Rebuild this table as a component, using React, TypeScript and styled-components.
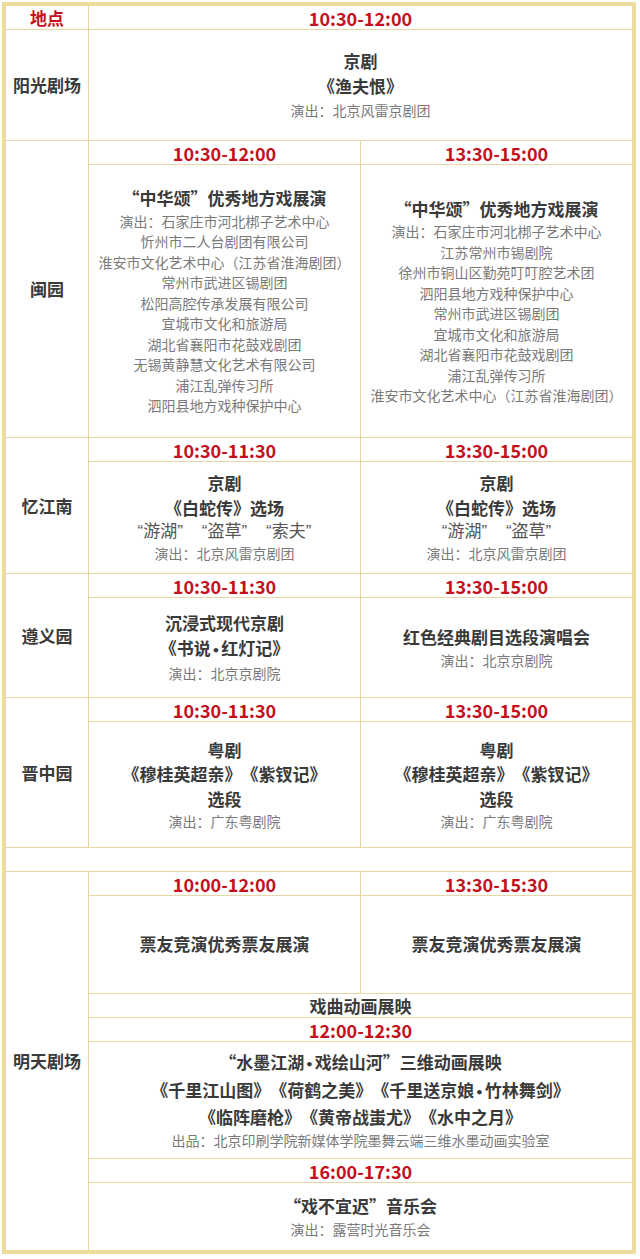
import styled, { createGlobalStyle } from 'styled-components'

const line = '#e6d6a6'
const gold = '#eedc9c'
const red = '#c4101c'

const GlobalStyle = createGlobalStyle`
  body {
    margin: 0;
    background: #fff;
    font-family: 'Noto Sans CJK SC', 'Noto Sans', sans-serif;
    text-spacing-trim: space-all;
  }
`

type Show = {
  time: string
  titles: React.ReactNode[]
  quotes?: string
  credits: string[]
}

export default function App() {
  return (
    <Page>
      <GlobalStyle />
      <Frame>
        <Row>
          <Label $red>地点</Label>
          <Body>
            <TimeBar $last>10:30-12:00</TimeBar>
          </Body>
        </Row>

        <Row>
          <Label>阳光剧场</Label>
          <Body>
            <Content $h={110}>
              <Title>京剧</Title>
              <Title>《渔夫恨》</Title>
              <Credit $gap>演出：北京风雷京剧团</Credit>
            </Content>
          </Body>
        </Row>

        <VenueRow
          name='闽园'
          h={272}
          shows={[
            {
              time: '10:30-12:00',
              titles: ['“中华颂”优秀地方戏展演'],
              credits: [
                '演出：石家庄市河北梆子艺术中心',
                '忻州市二人台剧团有限公司',
                '淮安市文化艺术中心（江苏省淮海剧团）',
                '常州市武进区锡剧团',
                '松阳高腔传承发展有限公司',
                '宜城市文化和旅游局',
                '湖北省襄阳市花鼓戏剧团',
                '无锡黄静慧文化艺术有限公司',
                '浦江乱弹传习所',
                '泗阳县地方戏种保护中心',
              ],
            },
            {
              time: '13:30-15:00',
              titles: ['“中华颂”优秀地方戏展演'],
              credits: [
                '演出：石家庄市河北梆子艺术中心',
                '江苏常州市锡剧院',
                '徐州市铜山区勤苑叮叮腔艺术团',
                '泗阳县地方戏种保护中心',
                '常州市武进区锡剧团',
                '宜城市文化和旅游局',
                '湖北省襄阳市花鼓戏剧团',
                '浦江乱弹传习所',
                '淮安市文化艺术中心（江苏省淮海剧团）',
              ],
            },
          ]}
        />

        <VenueRow
          name='忆江南'
          h={111}
          shows={[
            {
              time: '10:30-11:30',
              titles: ['京剧', '《白蛇传》选场'],
              quotes: '“游湖”    “盗草”    “索夫”',
              credits: ['演出：北京风雷京剧团'],
            },
            {
              time: '13:30-15:00',
              titles: ['京剧', '《白蛇传》选场'],
              quotes: '“游湖”    “盗草”',
              credits: ['演出：北京风雷京剧团'],
            },
          ]}
        />

        <VenueRow
          name='遵义园'
          h={99}
          shows={[
            {
              time: '10:30-11:30',
              titles: ['沉浸式现代京剧', <>《书说<Dot>•</Dot>红灯记》</>],
              credits: ['演出：北京京剧院'],
            },
            {
              time: '13:30-15:00',
              titles: ['红色经典剧目选段演唱会'],
              credits: ['演出：北京京剧院'],
            },
          ]}
        />

        <VenueRow
          name='晋中园'
          h={125}
          shows={[
            {
              time: '10:30-11:30',
              titles: ['粤剧', '《穆桂英超亲》《紫钗记》', '选段'],
              credits: ['演出：广东粤剧院'],
            },
            {
              time: '13:30-15:00',
              titles: ['粤剧', '《穆桂英超亲》《紫钗记》', '选段'],
              credits: ['演出：广东粤剧院'],
            },
          ]}
        />

        <Spacer />

        <Row $last>
          <Label>明天剧场</Label>
          <Body>
            <Split $divided>
              <Slot>
                <TimeBar>10:00-12:00</TimeBar>
                <Content $h={97}>
                  <Title>票友竞演优秀票友展演</Title>
                </Content>
              </Slot>
              <Slot>
                <TimeBar>13:30-15:30</TimeBar>
                <Content $h={97}>
                  <Title>票友竞演优秀票友展演</Title>
                </Content>
              </Slot>
            </Split>
            <TimeBar $dark>戏曲动画展映</TimeBar>
            <TimeBar>12:00-12:30</TimeBar>
            <Content $h={116} $divided>
              <Title>“水墨江湖<Dot>•</Dot>戏绘山河”三维动画展映</Title>
              <Title>《千里江山图》《荷鹤之美》《千里送京娘<Dot>•</Dot>竹林舞剑》</Title>
              <Title>《临阵磨枪》《黄帝战蚩尤》《水中之月》</Title>
              <Credit>出品：北京印刷学院新媒体学院墨舞云端三维水墨动画实验室</Credit>
            </Content>
            <TimeBar>16:00-17:30</TimeBar>
            <Content $h={67}>
              <Title>“戏不宜迟”音乐会</Title>
              <Credit>演出：露营时光音乐会</Credit>
            </Content>
          </Body>
        </Row>
      </Frame>
    </Page>
  )
}

function VenueRow({ name, h, shows }: { name: string; h: number; shows: Show[] }) {
  return (
    <Row>
      <Label>{name}</Label>
      <Body>
        <Split>
          {shows.map((s, i) => (
            <Slot key={i}>
              <TimeBar>{s.time}</TimeBar>
              <Content $h={h}>
                {s.titles.map((t, j) => <Title key={j}>{t}</Title>)}
                {s.quotes && <Quotes>{s.quotes}</Quotes>}
                {s.credits.map((c) => <Credit key={c}>{c}</Credit>)}
              </Content>
            </Slot>
          ))}
        </Split>
      </Body>
    </Row>
  )
}

const Page = styled.div`
  width: 640px;
  padding: 2px 4px 5px 2px;
  box-sizing: border-box;
`

const Frame = styled.div`
  border: 4px solid ${gold};
  background: #fff;
  display: flex;
  flex-direction: column;
`

const Row = styled.div<{ $last?: boolean }>`
  display: grid;
  grid-template-columns: 83px 1fr;
  border-bottom: ${(p) => (p.$last ? 'none' : `1px solid ${line}`)};
`

const Label = styled.div<{ $red?: boolean }>`
  border-right: 1px solid ${line};
  display: flex;
  align-items: center;
  justify-content: center;
  font-size: 17px;
  line-height: 20px;
  font-weight: 700;
  color: ${(p) => (p.$red ? red : '#3a3a3a')};
`

const Body = styled.div`
  display: flex;
  flex-direction: column;
`

const Split = styled.div<{ $divided?: boolean }>`
  display: grid;
  grid-template-columns: 272px 1fr;
  border-bottom: ${(p) => (p.$divided ? `1px solid ${line}` : 'none')};
`

const Slot = styled.div`
  display: flex;
  flex-direction: column;

  &:first-child {
    border-right: 1px solid ${line};
  }
`

const TimeBar = styled.div<{ $last?: boolean; $dark?: boolean }>`
  height: ${(p) => (p.$last ? '23px' : '24px')};
  box-sizing: border-box;
  border-bottom: ${(p) => (p.$last ? 'none' : `1px solid ${line}`)};
  display: flex;
  align-items: center;
  justify-content: center;
  font-size: ${(p) => (p.$dark ? '17px' : '18px')};
  line-height: 20px;
  font-weight: 700;
  color: ${(p) => (p.$dark ? '#3a3a3a' : red)};
  white-space: nowrap;
`

const Content = styled.div<{ $h: number; $divided?: boolean }>`
  height: ${(p) => p.$h + (p.$divided ? 1 : 0)}px;
  box-sizing: border-box;
  border-bottom: ${(p) => (p.$divided ? `1px solid ${line}` : 'none')};
  display: flex;
  flex-direction: column;
  align-items: center;
  justify-content: center;
  text-align: center;
`

const Title = styled.div`
  font-size: 17px;
  line-height: 24.5px;
  font-weight: 700;
  color: #3a3a3a;
  white-space: nowrap;
`

const Dot = styled.span`
  font-family: 'DejaVu Sans', sans-serif;
  font-size: 13px;
  margin: 0 1px;
`

const Quotes = styled.div`
  font-family: 'Liberation Sans', 'Noto Sans CJK SC', sans-serif;
  font-size: 17px;
  line-height: 23px;
  color: #555;
  white-space: pre;
`

const Credit = styled.div<{ $gap?: boolean }>`
  font-size: 14px;
  line-height: 20.5px;
  margin-top: ${(p) => (p.$gap ? '2px' : '0')};
  color: #7a7a7a;
  white-space: nowrap;
`

const Spacer = styled.div`
  height: 23px;
  border-bottom: 1px solid ${line};
`
